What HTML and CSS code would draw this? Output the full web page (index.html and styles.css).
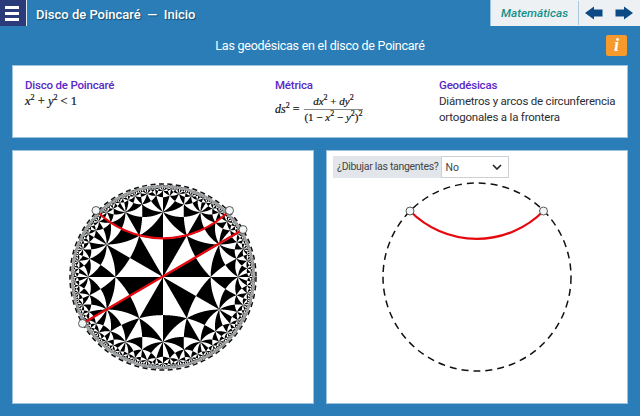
FILE: index.html
```html
<!DOCTYPE html>
<html lang="es">

<head>
    <meta charset="UTF-8">
    <title>Disco de Poincaré</title>
    <link rel="stylesheet" href="styles.css">
</head>

<body>
    <header class="barra">
        <button class="btn-menu" aria-label="Menú">
            <span></span><span></span><span></span>
        </button>
        <h1 class="titulo">Disco de Poincaré&nbsp; —&nbsp; Inicio</h1>
        <div class="pestana">
            <em class="materia">Matemáticas</em>
            <svg class="flechas" width="50" height="16" viewBox="0 0 50 16">
                <path d="M1 8 10 1.500V4.500H18.500V11.500H10V14.500Z" />
                <path d="M49 8 40 1.500V4.500H31.500V11.500H40V14.500Z" />
            </svg>
        </div>
    </header>

    <div class="subtitulo">
        <h2>Las geodésicas en el disco de Poincaré</h2>
        <button class="btn-info">i</button>
    </div>

    <section class="resumen">
        <div class="col col-disco">
            <h3>Disco de Poincaré</h3>
            <p class="formula"><i>x</i><sup>2</sup> + <i>y</i><sup>2</sup> &lt; 1</p>
        </div>
        <div class="col col-metrica">
            <h3>Métrica</h3>
            <div class="formula formula-metrica">
                <span><i>ds</i><sup>2</sup> =</span>
                <span class="fraccion">
                    <span class="num"><i>dx</i><sup>2</sup> + <i>dy</i><sup>2</sup></span>
                    <span class="den">(1 − <i>x</i><sup>2</sup> − <i>y</i><sup>2</sup>)<sup>2</sup></span>
                </span>
            </div>
        </div>
        <div class="col col-geo">
            <h3>Geodésicas</h3>
            <p>Diámetros y arcos de circunferencia<br>ortogonales a la frontera</p>
        </div>
    </section>

    <main class="paneles">
        <section class="panel">
            <div class="disco">
                <canvas id="teselado" width="184" height="184"></canvas>
                <svg class="trazos" width="200" height="200" viewBox="0 0 200 200">
                    <circle class="anillo" cx="100" cy="100" r="90.500" />
                    <circle class="frontera frontera-tupida" cx="100" cy="100" r="93" />
                    <path class="geodesica" d="M33 33.500A94 94 0 0 0 166.500 33.500" />
                    <path class="geodesica" d="M19.500 146.500 180 52.500" />
                    <circle class="punto" cx="33" cy="33.500" r="4" />
                    <circle class="punto" cx="166.500" cy="33.500" r="4" />
                    <circle class="punto" cx="19.500" cy="146.500" r="4" />
                    <circle class="punto" cx="180" cy="52.500" r="4" />
                </svg>
            </div>
        </section>
        <section class="panel">
            <div class="control">
                <label for="tangentes">¿Dibujar las tangentes?</label>
                <div class="selector">
                    <select id="tangentes">
                        <option>No</option>
                        <option>Sí</option>
                    </select>
                    <svg width="10" height="6" viewBox="0 0 10 6">
                        <path d="M1 1 5 5 9 1" />
                    </svg>
                </div>
            </div>
            <div class="disco">
                <svg class="trazos" width="200" height="200" viewBox="0 0 200 200">
                    <circle class="frontera" cx="100" cy="100" r="94" />
                    <path class="geodesica" d="M33 34A94 94 0 0 0 166.500 34" />
                    <circle class="punto" cx="33" cy="34" r="4" />
                    <circle class="punto" cx="166.500" cy="34" r="4" />
                </svg>
            </div>
        </section>
    </main>

    <script src="teselado.js"></script>
</body>

</html>
```
FILE: styles.css
```css
:root {
    --azul: #2a7db6;
    --borde: #9cc4de;
    --morado: #5b28c6;
    --texto: #2b2d33;
}

* {
    margin: 0;
    padding: 0;
    box-sizing: border-box;
}

body {
    font-family: 'Roboto', sans-serif;
    background: var(--azul);
    height: 416px;
    overflow: hidden;
    color: var(--texto);
}

button {
    border: none;
    font-family: inherit;
}

.barra {
    display: flex;
    align-items: stretch;
    height: 26px;
}

.btn-menu {
    width: 27px;
    padding-right: 2px;
    background: #2b3a78;
    border-right: 1px solid #dfe9f1;
    display: flex;
    flex-direction: column;
    justify-content: center;
    align-items: center;
    gap: 3px;
}

.btn-menu span {
    display: block;
    width: 14px;
    height: 3px;
    background: white;
}

.titulo {
    flex: 1;
    padding-left: 9px;
    font-size: 13px;
    font-weight: 500;
    line-height: 29px;
    color: white;
    text-shadow: 1px 1px 1px rgba(0, 0, 0, 0.4);
}

.pestana {
    width: 150px;
    background: #eef1f3;
    border-left: 1px solid #9cc4de;
    display: flex;
    align-items: center;
    padding-left: 10px;
}

.materia {
    font-size: 11.800px;
    font-weight: 500;
    color: #12908a;
    width: 78px;
    border-right: 1px solid #a9c9e0;
    line-height: 24px;
}

.flechas {
    margin-left: 5px;
    fill: #0b4a85;
}

.subtitulo {
    position: relative;
    height: 39px;
    display: flex;
    align-items: center;
    justify-content: center;
}

.subtitulo h2 {
    font-size: 12.500px;
    font-weight: 400;
    letter-spacing: -0.24px;
    color: white;
}

.btn-info {
    position: absolute;
    left: 606px;
    top: 9px;
    width: 21px;
    height: 21px;
    border-radius: 2px;
    background: #f79a2e;
    color: white;
    font: italic bold 18px 'Liberation Serif', serif;
}

.resumen {
    height: 73px;
    margin: 0 12px;
    background: white;
    border: 1px solid var(--borde);
    display: flex;
    padding: 12px 0 0 12px;
    font-size: 11.500px;
    line-height: 16px;
    letter-spacing: -0.2px;
}

.resumen h3 {
    font-size: 11.500px;
    font-weight: 500;
    color: var(--morado);
    line-height: 15px;
}

.col {
    flex: none;
}

.col-disco {
    width: 250px;
}

.col-metrica {
    width: 164px;
}

.col-geo p {
    white-space: nowrap;
}

.formula {
    font-family: 'Liberation Serif', serif;
    font-size: 12.500px;
    letter-spacing: 0;
    color: #111;
    -webkit-text-stroke: 0.2px #111;
}

.formula sup {
    font-size: 8px;
    line-height: 0;
}

.formula-metrica {
    display: flex;
    align-items: center;
    gap: 5px;
    margin-top: 1px;
    font-size: 12px;
}

.fraccion {
    display: inline-flex;
    flex-direction: column;
    align-items: center;
    font-size: 11px;
    line-height: 14px;
}

.num {
    border-bottom: 1px solid #888;
    padding: 0 0 1px;
    width: 100%;
    text-align: center;
}

.paneles {
    display: flex;
    gap: 12px;
    margin: 12px 12px 0;
}

.panel {
    position: relative;
    flex: 1;
    height: 254px;
    background: white;
    border: 1px solid var(--borde);
    display: flex;
    align-items: center;
    justify-content: center;
}

.disco {
    position: relative;
    width: 200px;
    height: 200px;
}

#teselado {
    position: absolute;
    left: 8px;
    top: 8px;
    filter: blur(0.4px);
}

.trazos {
    position: absolute;
    left: 0;
    top: 0;
}

.anillo {
    fill: none;
    stroke: #a5abae;
    stroke-width: 2;
    opacity: 0.8;
}

.frontera {
    fill: none;
    stroke: #111;
    stroke-width: 1.500;
    stroke-dasharray: 7 5;
}

.frontera-tupida {
    stroke-dasharray: 5 3.500;
}

.geodesica {
    fill: none;
    stroke: #e5090f;
    stroke-width: 2.200;
}

.punto {
    fill: #f2f5f6;
    stroke: #333;
    stroke-width: 0.800;
}

.control {
    position: absolute;
    left: 6px;
    top: 5px;
    display: flex;
    align-items: stretch;
    height: 22px;
    background: #e2e6ea;
    font-size: 10.500px;
    letter-spacing: -0.3px;
    z-index: 1;
}

.control label {
    padding: 0 3px 0 4px;
    line-height: 21px;
    color: #444;
}

.selector {
    position: relative;
    width: 68px;
    background: white;
    border: 1px solid #ccd1d6;
}

.selector select {
    appearance: none;
    width: 100%;
    height: 100%;
    border: none;
    background: none;
    padding-left: 3px;
    font: 10.500px 'Roboto', sans-serif;
    color: #444;
}

.selector svg {
    position: absolute;
    right: 6px;
    top: 7px;
    fill: none;
    stroke: #222;
    stroke-width: 1.600;
    pointer-events: none;
}
```
FILE: teselado.js
```js
// Teselado hiperbólico (2,4,6): cada píxel se refleja hasta el triángulo
// fundamental y el color sale de la paridad de las reflexiones
const canvas = document.getElementById('teselado');
const ctx = canvas.getContext('2d');
const lado = canvas.width;
const radio = lado / 2;
const img = ctx.createImageData(lado, lado);
const SUB = 4;
const SECTOR = Math.PI / 6;
const CY = Math.SQRT2;

function esNegro(x, y) {
    let paridad = 0;
    for (let i = 0; i < 80; i++) {
        let ang = Math.atan2(x, y);
        if (ang < 0) ang += 2 * Math.PI;
        const n = Math.floor(ang / SECTOR);
        let resto = ang - n * SECTOR;
        if (n % 2 === 1) resto = SECTOR - resto;
        paridad += n;
        const r = Math.hypot(x, y);
        x = r * Math.sin(resto);
        y = r * Math.cos(resto);

        const dy = y - CY;
        const d2 = x * x + dy * dy;
        if (d2 >= 1) break;
        x = x / d2;
        y = CY + dy / d2;
        paridad++;
    }
    return paridad % 2 === 0;
}

for (let py = 0; py < lado; py++) {
    for (let px = 0; px < lado; px++) {
        let suma = 0;
        let dentro = 0;
        for (let a = 0; a < SUB; a++) {
            for (let b = 0; b < SUB; b++) {
                const x = (px + (a + 0.5) / SUB - radio) / radio;
                const y = (radio - py - (b + 0.5) / SUB) / radio;
                if (x * x + y * y >= 1) continue;
                dentro++;
                if (!esNegro(x, y)) suma += 255;
            }
        }
        const i = (py * lado + px) * 4;
        const gris = dentro ? suma / dentro : 255;
        img.data[i] = gris;
        img.data[i + 1] = gris;
        img.data[i + 2] = gris;
        img.data[i + 3] = dentro ? 255 * dentro / (SUB * SUB) : 0;
    }
}
ctx.putImageData(img, 0, 0);
```
